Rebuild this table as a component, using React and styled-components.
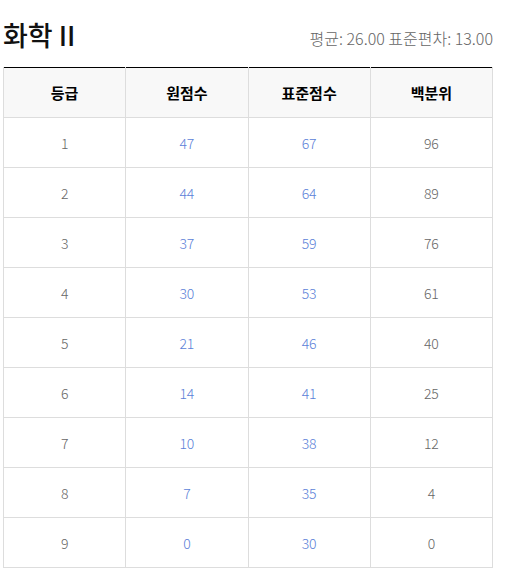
import React from "react";
import styled, { createGlobalStyle } from "styled-components";

const Global = createGlobalStyle`
  html, body { margin: 0; padding: 0; background: #fff; }
  body { font-family: "Noto Sans CJK KR", "Noto Sans", sans-serif; }
`;

const Page = styled.div`
  width: 490px;
  padding: 18px 0 0 3px;
`;

const Head = styled.div`
  display: flex;
  justify-content: space-between;
  align-items: flex-end;
  margin-bottom: 15px;
`;

const Title = styled.h2`
  margin: 0;
  font-size: 27px;
  font-weight: 500;
  line-height: 34px;
  color: #111;
`;

const Stats = styled.div`
  font-size: 16px;
  font-weight: 300;
  color: #666;
  line-height: 22px;
  margin-bottom: 3px;
`;

const Table = styled.table`
  width: 490px;
  border-collapse: collapse;
  border-top: 1px solid #000;
  table-layout: fixed;
`;

const Th = styled.th`
  height: 49px;
  padding: 0;
  background: #f8f8f8;
  border: 1px solid #ddd;
  border-top: none;
  font-size: 15px;
  font-weight: 700;
  color: #000;
  text-align: center;
`;

const Td = styled.td`
  height: 49px;
  padding: 0;
  border: 1px solid #ddd;
  font-size: 14px;
  font-weight: 300;
  color: ${(p) => (p.$accent ? "#5b7fd8" : "#666")};
  text-align: center;
`;

const rows = [
  [1, 47, 67, 96],
  [2, 44, 64, 89],
  [3, 37, 59, 76],
  [4, 30, 53, 61],
  [5, 21, 46, 40],
  [6, 14, 41, 25],
  [7, 10, 38, 12],
  [8, 7, 35, 4],
  [9, 0, 30, 0],
];

export default function App() {
  return (
    <Page>
      <Global />
      <Head>
        <Title>화학 II</Title>
        <Stats>평균: 26.00 표준편차: 13.00</Stats>
      </Head>
      <Table>
        <thead>
          <tr>
            <Th>등급</Th>
            <Th>원점수</Th>
            <Th>표준점수</Th>
            <Th>백분위</Th>
          </tr>
        </thead>
        <tbody>
          {rows.map((r) => (
            <tr key={r[0]}>
              <Td>{r[0]}</Td>
              <Td $accent>{r[1]}</Td>
              <Td $accent>{r[2]}</Td>
              <Td>{r[3]}</Td>
            </tr>
          ))}
        </tbody>
      </Table>
    </Page>
  );
}
